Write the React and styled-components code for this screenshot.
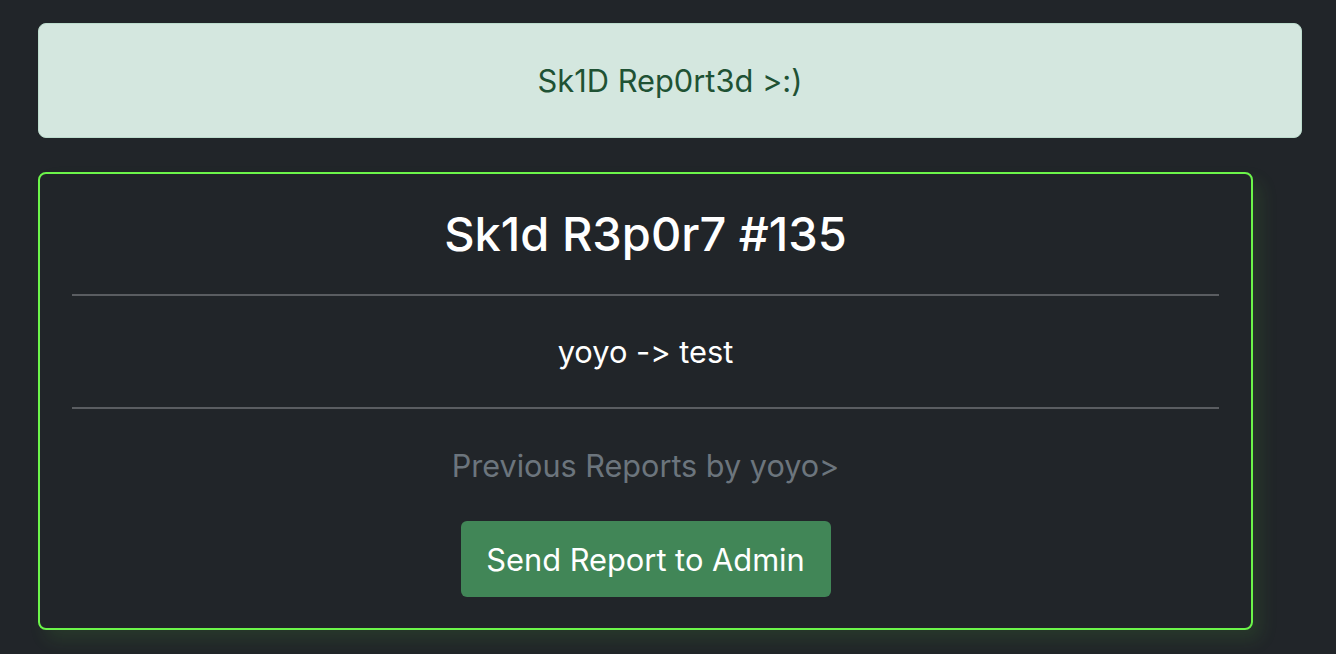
import React from 'react';
import styled, { createGlobalStyle } from 'styled-components';

const GlobalStyle = createGlobalStyle`
  html, body {
    margin: 0;
    padding: 0;
    background: #212529;
    font-family: Inter, "Open Sans", sans-serif;
    font-variant-ligatures: none;
    font-feature-settings: "calt" 0, "liga" 0;
    -webkit-font-smoothing: antialiased;
  }
`;

const Page = styled.div`
  display: flex;
  flex-direction: column;
  align-items: flex-start;
  padding: 23px 34px 0 38px;
  min-height: 654px;
  box-sizing: border-box;
`;

const Alert = styled.div`
  width: 100%;
  height: 115px;
  box-sizing: border-box;
  display: flex;
  align-items: center;
  justify-content: center;
  background: #d4e7df;
  border: 1px solid #bcdccd;
  border-radius: 8px;
  color: #1f5234;
  font-size: 30.8px;
  font-weight: 400;
`;

const Card = styled.div`
  margin-top: 34px;
  width: 1215px;
  height: 458px;
  box-sizing: border-box;
  border: 2px solid #6cf54a;
  border-radius: 8px;
  padding: 0 32px;
  display: flex;
  flex-direction: column;
  align-items: center;
  box-shadow: 8px 10px 18px rgba(90, 200, 60, 0.12);
`;

const Title = styled.h2`
  margin: 33px 0 0;
  font-size: 47px;
  line-height: 54px;
  font-weight: 500;
  color: #ffffff;
`;

const Rule = styled.hr`
  align-self: stretch;
  margin: ${(p) => p.$top}px 0 0;
  border: 0;
  height: 2px;
  background: #5a5d61;
`;

const Pair = styled.div`
  height: 111px;
  display: flex;
  align-items: center;
  font-size: 30.8px;
  color: #ffffff;
`;

const History = styled.a`
  margin-top: 40px;
  font-size: 30.6px;
  line-height: 34px;
  color: #6c757d;
  text-decoration: none;
`;

const SendButton = styled.button`
  margin-top: 38px;
  width: 370px;
  height: 76px;
  border: 0;
  border-radius: 6px;
  background: #418657;
  color: #ffffff;
  font-family: inherit;
  font-variant-ligatures: none;
  font-size: 30.8px;
  cursor: pointer;
`;

export default function App() {
  return (
    <>
      <GlobalStyle />
      <Page>
        <Alert>Sk1D Rep0rt3d &gt;:)</Alert>
        <Card>
          <Title>Sk1d R3p0r7 #135</Title>
          <Rule $top={33} />
          <Pair>yoyo -&gt; test</Pair>
          <Rule $top={0} />
          <History href="#">Previous Reports by yoyo&gt;</History>
          <SendButton>Send Report to Admin</SendButton>
        </Card>
      </Page>
    </>
  );
}
